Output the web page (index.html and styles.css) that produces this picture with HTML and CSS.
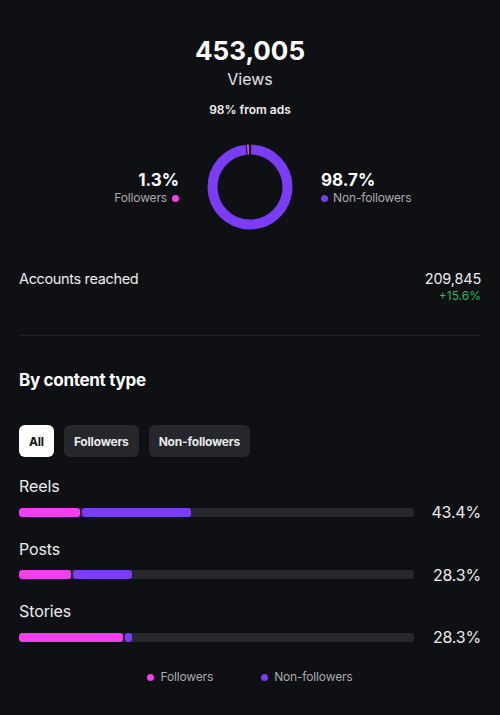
FILE: index.html
```html
<!DOCTYPE html>
<html lang="en">
<head>
<meta charset="utf-8">
<title>Views</title>
<link rel="stylesheet" href="styles.css">
</head>
<body>
<main class="page">
  <section class="hero">
    <div class="total">453,005</div>
    <div class="total-label">Views</div>
    <div class="ads">98% from ads</div>
    <div class="split">
      <div class="stat stat-left">
        <div class="stat-value">1.3%</div>
        <div class="stat-label">Followers <span class="dot dot-pink"></span></div>
      </div>
      <svg class="donut" width="86" height="86" viewBox="0 0 86 86">
        <circle cx="43" cy="43" r="37.5" fill="none" stroke="#7a3cf4" stroke-width="10" stroke-dasharray="230.1 1000" stroke-dashoffset="-1.2" transform="rotate(-90 43 43)"/>
        <circle cx="43" cy="43" r="37.5" fill="none" stroke="#f23fee" stroke-width="10" stroke-dasharray="1.8 1000" stroke-dashoffset="-232.4" transform="rotate(-90 43 43)"/>
      </svg>
      <div class="stat stat-right">
        <div class="stat-value">98.7%</div>
        <div class="stat-label"><span class="dot dot-purple"></span> Non-followers</div>
      </div>
    </div>
  </section>

  <section class="reach">
    <div class="reach-label">Accounts reached</div>
    <div class="reach-values">
      <div class="reach-num">209,845</div>
      <div class="reach-delta">+15.6%</div>
    </div>
  </section>

  <hr class="divider">

  <h2 class="section-title">By content type</h2>

  <div class="pills">
    <button class="pill pill-active">All</button>
    <button class="pill">Followers</button>
    <button class="pill">Non-followers</button>
  </div>

  <div class="types">
    <div class="type">
      <div class="type-name">Reels</div>
      <div class="type-row">
        <div class="track">
          <span class="seg seg-pink" style="width:61px"></span>
          <span class="seg seg-purple" style="width:109px"></span>
        </div>
        <div class="pct">43.4%</div>
      </div>
    </div>
    <div class="type">
      <div class="type-name">Posts</div>
      <div class="type-row">
        <div class="track">
          <span class="seg seg-pink" style="width:52px"></span>
          <span class="seg seg-purple" style="width:59px"></span>
        </div>
        <div class="pct">28.3%</div>
      </div>
    </div>
    <div class="type">
      <div class="type-name">Stories</div>
      <div class="type-row">
        <div class="track">
          <span class="seg seg-pink" style="width:104px"></span>
          <span class="seg seg-purple" style="width:7px"></span>
        </div>
        <div class="pct">28.3%</div>
      </div>
    </div>
  </div>

  <div class="legend">
    <span class="legend-item"><span class="dot dot-pink"></span>Followers</span>
    <span class="legend-item"><span class="dot dot-purple"></span>Non-followers</span>
  </div>
</main>
</body>
</html>
```

FILE: styles.css
```css
html, body {
  margin: 0;
  padding: 0;
  background: #0e1014;
}

body {
  font-family: Inter, "Noto Sans", "Liberation Sans", sans-serif;
  color: #f2f2f2;
  width: 500px;
  height: 715px;
  overflow: hidden;
}

.page {
  padding: 35px 19px 0;
}

.hero {
  display: flex;
  flex-direction: column;
  align-items: center;
}

.total {
  font-size: 26px;
  line-height: 32px;
  font-weight: 700;
  color: #ffffff;
}

.total-label {
  margin-top: 2px;
  font-size: 16px;
  line-height: 20px;
  color: #e4e4e6;
}

.ads {
  margin-top: 13px;
  font-size: 12px;
  line-height: 16px;
  font-weight: 600;
  color: #f0f0f0;
}

.split {
  margin-top: 26px;
  width: 100%;
  display: grid;
  grid-template-columns: 1fr auto 1fr;
  column-gap: 28px;
  align-items: center;
}

.donut {
  display: block;
}

.stat {
  display: flex;
  flex-direction: column;
  margin-top: 3px;
}

.stat-left {
  align-items: flex-end;
}

.stat-right {
  align-items: flex-start;
}

.stat-value {
  font-size: 17px;
  line-height: 18px;
  font-weight: 700;
  color: #ffffff;
}

.stat-label {
  margin-top: 1px;
  font-size: 12px;
  line-height: 16px;
  letter-spacing: -0.15px;
  color: #a9aab0;
  display: flex;
  align-items: center;
  gap: 5px;
}

.dot {
  display: inline-block;
  width: 7px;
  height: 7px;
  border-radius: 50%;
}

.dot-pink {
  background: #f23fee;
}

.dot-purple {
  background: #7a3cf4;
}

.reach {
  margin-top: 40px;
  display: flex;
  justify-content: space-between;
  align-items: flex-start;
}

.reach-label {
  font-size: 14.5px;
  line-height: 18px;
  letter-spacing: -0.35px;
  color: #ececee;
}

.reach-values {
  text-align: right;
}

.reach-num {
  font-size: 14.5px;
  line-height: 18px;
  letter-spacing: -0.2px;
  color: #ececee;
}

.reach-delta {
  font-size: 12px;
  line-height: 15px;
  color: #2cb35c;
}

.divider {
  margin: 32px 0 0;
  border: 0;
  height: 1px;
  background: #202228;
}

.section-title {
  margin: 33px 0 0;
  font-size: 17px;
  line-height: 22px;
  font-weight: 700;
  letter-spacing: -0.3px;
  color: #ffffff;
}

.pills {
  margin-top: 34px;
  display: flex;
  gap: 10px;
}

.pill {
  height: 32px;
  padding: 0 10px;
  border: 0;
  border-radius: 6px;
  background: #25272d;
  color: #e9e9eb;
  font-family: inherit;
  font-size: 12px;
  font-weight: 700;
  letter-spacing: -0.2px;
}

.pill-active {
  background: #ffffff;
  color: #0e1014;
}

.types {
  margin-top: 19px;
  display: flex;
  flex-direction: column;
  gap: 16.5px;
}

.type-name {
  font-size: 16px;
  line-height: 20px;
  letter-spacing: -0.1px;
  color: #ececee;
}

.type-row {
  margin-top: 6px;
  display: flex;
  align-items: center;
}

.track {
  flex: 1;
  height: 9px;
  border-radius: 3px;
  background: #26282e;
  display: flex;
  gap: 2px;
  overflow: hidden;
}

.seg {
  display: block;
  height: 100%;
  border-radius: 3px;
}

.seg-pink {
  background: #f23fee;
}

.seg-purple {
  background: #7a3cf4;
}

.pct {
  width: 67px;
  text-align: right;
  font-size: 16px;
  line-height: 20px;
  letter-spacing: -0.2px;
  color: #ececee;
}

.legend {
  margin-top: 22px;
  display: flex;
  justify-content: center;
  gap: 48px;
  font-size: 12px;
  line-height: 16px;
  letter-spacing: -0.15px;
  color: #a9aab0;
}

.legend-item {
  display: flex;
  align-items: center;
  gap: 6px;
}
```
